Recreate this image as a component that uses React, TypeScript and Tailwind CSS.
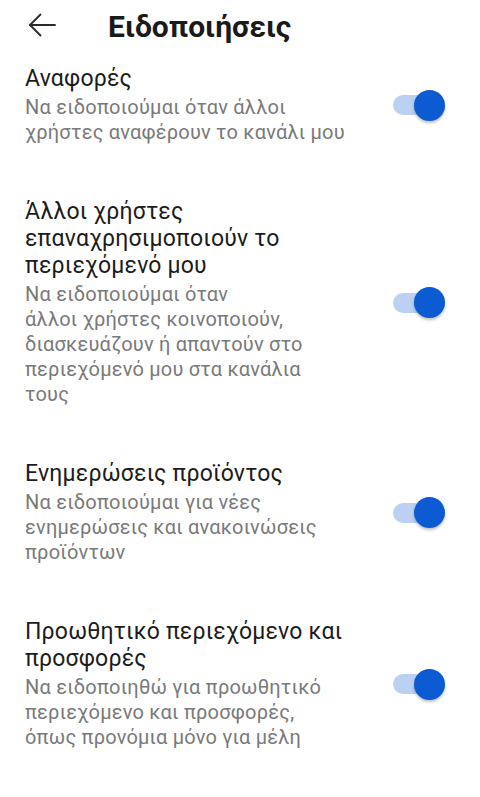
import React from 'react';

interface Setting {
  title: string[];
  desc: string[];
}

const settings: Setting[] = [
  {
    title: ['Αναφορές'],
    desc: ['Να ειδοποιούμαι όταν άλλοι', 'χρήστες αναφέρουν το κανάλι μου'],
  },
  {
    title: ['Άλλοι χρήστες', 'επαναχρησιμοποιούν το', 'περιεχόμενό μου'],
    desc: [
      'Να ειδοποιούμαι όταν',
      'άλλοι χρήστες κοινοποιούν,',
      'διασκευάζουν ή απαντούν στο',
      'περιεχόμενό μου στα κανάλια',
      'τους',
    ],
  },
  {
    title: ['Ενημερώσεις προϊόντος'],
    desc: ['Να ειδοποιούμαι για νέες', 'ενημερώσεις και ανακοινώσεις', 'προϊόντων'],
  },
  {
    title: ['Προωθητικό περιεχόμενο και', 'προσφορές'],
    desc: ['Να ειδοποιηθώ για προωθητικό', 'περιεχόμενο και προσφορές,', 'όπως προνόμια μόνο για μέλη'],
  },
];

const Toggle: React.FC = () => (
  <div className="relative w-[52px] h-[31px] flex items-center shrink-0">
    <div className="w-[44px] h-[20px] rounded-full bg-[#bcd0f3]"></div>
    <div className="absolute right-0 top-0 w-[31px] h-[31px] rounded-full bg-[#0d5bd3] shadow-[0_2px_3px_rgba(0,0,0,0.25)]"></div>
  </div>
);

const App: React.FC = () => {
  return (
    <div className="w-[480px] min-h-[797px] bg-white font-['Roboto','Noto_Sans',sans-serif]">
      {/* Header */}
      <div className="flex items-start pt-[9px] h-[45px]">
        <svg
          className="ml-[28px] mt-[3px] text-[#2a2a2a]"
          width="30"
          height="26"
          viewBox="0 0 30 26"
          fill="none"
          stroke="currentColor"
          strokeWidth="1.8"
          strokeLinecap="round"
          strokeLinejoin="round"
        >
          <path d="M27 13H2" />
          <path d="M12.5 2.5L2 13l10.5 10.5" />
        </svg>
        <h1 className="ml-[50px] text-[30px] leading-[36px] font-bold text-[#1a1a1a]">Ειδοποιήσεις</h1>
      </div>

      {/* Settings */}
      <div className="flex flex-col gap-[53px] pt-[20px] pl-[25px] pr-[35px] tracking-[0.2px]">
        {settings.map((s, i) => (
          <div key={i} className="flex items-center">
            <div className="flex-1">
              <div className="text-[23px] leading-[27px] text-[#1c1c1c]">
                {s.title.map((line, j) => (
                  <div key={j} className="whitespace-nowrap">{line}</div>
                ))}
              </div>
              <div className="mt-[3px] text-[20px] leading-[25px] text-[#7a7a7a]">
                {s.desc.map((line, j) => (
                  <div key={j} className="whitespace-nowrap">{line}</div>
                ))}
              </div>
            </div>
            <Toggle />
          </div>
        ))}
      </div>
    </div>
  );
};

export default App;
